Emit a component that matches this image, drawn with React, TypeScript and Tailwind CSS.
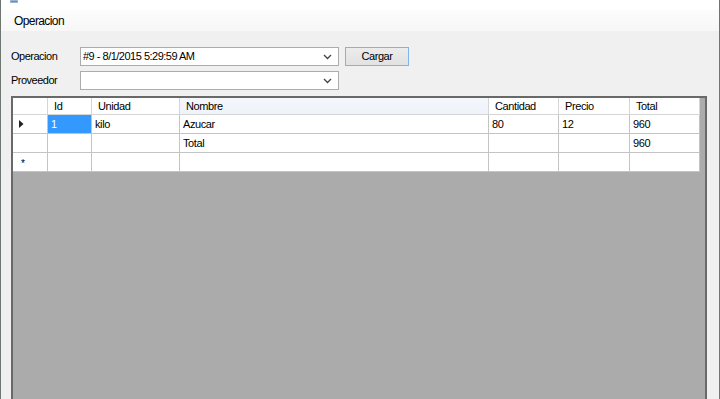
import React from "react";

const cols = ["Id", "Unidad", "Nombre", "Cantidad", "Precio", "Total"];

const rows = [
  { mark: "arrow", cells: ["1", "kilo", "Azucar", "80", "12", "960"] },
  { mark: "", cells: ["", "", "Total", "", "", "960"] },
  { mark: "star", cells: ["", "", "", "", "", ""] },
];

const Chevron = () => (
  <svg width="9" height="6" viewBox="0 0 9 6" className="shrink-0">
    <path d="M1 1 L4.5 4.5 L8 1" fill="none" stroke="#444" strokeWidth="1.3" />
  </svg>
);

const Combo = ({ value }: { value: string }) => (
  <div className="w-[259px] h-[19px] bg-white border border-[#acacac] flex items-center pl-[2px] pr-[6px]">
    <span className="flex-1 tracking-[-0.5px] text-[11px] text-black">{value}</span>
    <Chevron />
  </div>
);

export default function App() {
  return (
    <div
      className="w-[720px] h-[399px] overflow-hidden flex flex-col bg-[#f0f0f0] border-x border-[#6d7770] text-black"
      style={{ fontFamily: '"Liberation Sans", Arial, sans-serif' }}
    >
      {/* title bar remnant */}
      <div className="h-[10px] shrink-0 bg-white flex pl-[9px]">
        <div className="w-[8px] h-[3px] bg-[#5d8fc9] border border-[#9bb5d6]" />
      </div>

      {/* menu */}
      <div className="h-[21px] shrink-0 bg-gradient-to-b from-[#fcfcfc] to-[#f7f7f7] flex items-center pl-[13px]">
        <span className="text-[12px] tracking-[-0.6px]">Operacion</span>
      </div>

      {/* form */}
      <div className="shrink-0 flex flex-col pl-[10px] pt-[16px] gap-[5px]">
        <div className="flex items-center">
          <span className="w-[69px] text-[11px] tracking-[-0.5px]">Operacion</span>
          <Combo value="#9 - 8/1/2015 5:29:59 AM" />
          <button className="ml-[6px] w-[64px] h-[19px] bg-gradient-to-b from-[#ececec] to-[#e2e2e2] border border-[#7eb4ea] text-[11px] tracking-[-0.4px]">
            Cargar
          </button>
        </div>
        <div className="flex items-center">
          <span className="w-[69px] text-[11px] tracking-[-0.5px]">Proveedor</span>
          <Combo value="" />
        </div>
      </div>

      {/* data grid */}
      <div className="ml-[10px] mt-[6px] w-[696px] h-[320px] shrink-0 border-2 border-[#696969] bg-[#ababab]">
        <div className="grid grid-cols-[35px_44px_88px_309px_70px_71px_70px] text-[11px] tracking-[-0.4px]">
          <div className="h-[17px] bg-white border-r border-b border-[#d5d5d5]" />
          {cols.map((c) => (
            <div
              key={c}
              className={`h-[17px] border-r border-b border-[#d5d5d5] pl-[6px] flex items-center ${
                c === "Nombre" ? "bg-gradient-to-b from-[#f4f7fc] to-[#eef3fa]" : "bg-white"
              }`}
            >
              {c}
            </div>
          ))}
          {rows.map((r, i) => (
            <React.Fragment key={i}>
              <div className="h-[19px] bg-white border-r border-b border-[#c4c4c4] flex items-center pl-[6px]">
                {r.mark === "arrow" && (
                  <svg width="5" height="8" viewBox="0 0 5 8">
                    <path d="M0 0 L4.5 4 L0 8 Z" fill="#222" />
                  </svg>
                )}
                {r.mark === "star" && <span className="text-[10px] leading-none pl-[2px] pt-[3px]">*</span>}
              </div>
              {r.cells.map((v, j) => (
                <div
                  key={j}
                  className={`h-[19px] border-r border-b border-[#c4c4c4] pl-[3px] flex items-center ${
                    i === 0 && j === 0 ? "bg-[#3399ff] text-white" : "bg-white"
                  }`}
                >
                  {v}
                </div>
              ))}
            </React.Fragment>
          ))}
        </div>
      </div>
    </div>
  );
}
